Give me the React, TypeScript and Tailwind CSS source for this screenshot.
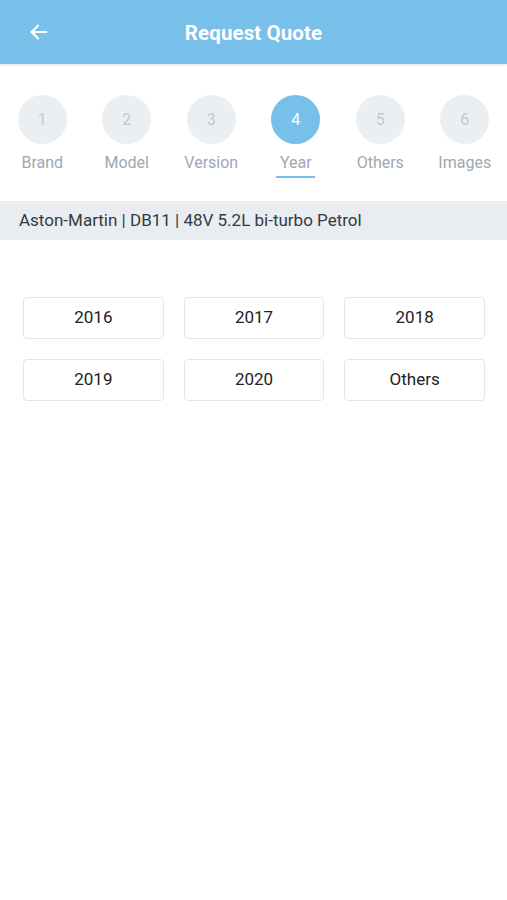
import React from "react";

const steps = [
  { n: 1, label: "Brand" },
  { n: 2, label: "Model" },
  { n: 3, label: "Version" },
  { n: 4, label: "Year", active: true },
  { n: 5, label: "Others" },
  { n: 6, label: "Images" },
];

const years = ["2016", "2017", "2018", "2019", "2020", "Others"];

export default function App() {
  return (
    <div className="w-[507px] min-h-[900px] bg-white" style={{ fontFamily: "Roboto, 'Noto Sans', sans-serif" }}>
      <header className="relative h-[64px] bg-[#78bfe9] flex items-center justify-center shadow-[0_1px_2px_rgba(0,0,0,0.12)]">
        <button className="absolute left-[28px] top-[21px] text-white">
          <svg width="22" height="22" viewBox="0 0 24 24" fill="none" stroke="white" strokeWidth="2.4" strokeLinecap="round" strokeLinejoin="round">
            <path d="M20 12H4" />
            <path d="M11 5l-7 7 7 7" />
          </svg>
        </button>
        <h1 className="text-white font-bold text-[20.5px] tracking-[0.1px] pt-[2px]">Request Quote</h1>
      </header>

      <div className="grid grid-cols-6 pt-[31px] pb-[23px]">
        {steps.map((s) => (
          <div key={s.n} className="flex flex-col items-center">
            <div
              className={
                "w-[49px] h-[49px] rounded-full flex items-center justify-center text-[16px] " +
                (s.active ? "bg-[#78bfe9] text-white" : "bg-[#eceff2] text-[#c3c8ce]")
              }
            >
              {s.n}
            </div>
            <div className="mt-[9px] text-[16px] leading-[20px] text-[#a0a7b0]">{s.label}</div>
            <div className={"mt-[3px] h-[2px] w-[39px] " + (s.active ? "bg-[#78bfe9]" : "bg-transparent")} />
          </div>
        ))}
      </div>

      <div className="h-[39px] bg-[#e9edf1] flex items-center px-[19px] text-[17px] text-[#333a40]">
        Aston-Martin | DB11 | 48V 5.2L bi-turbo Petrol
      </div>

      <div className="grid grid-cols-3 gap-x-[20px] gap-y-[20px] pl-[23px] pr-[22px] pt-[57px]">
        {years.map((y) => (
          <button
            key={y}
            className="h-[42px] rounded-[4px] border border-[#e3e5e8] bg-white text-[17px] text-[#222] flex items-center justify-center"
          >
            {y}
          </button>
        ))}
      </div>
    </div>
  );
}
